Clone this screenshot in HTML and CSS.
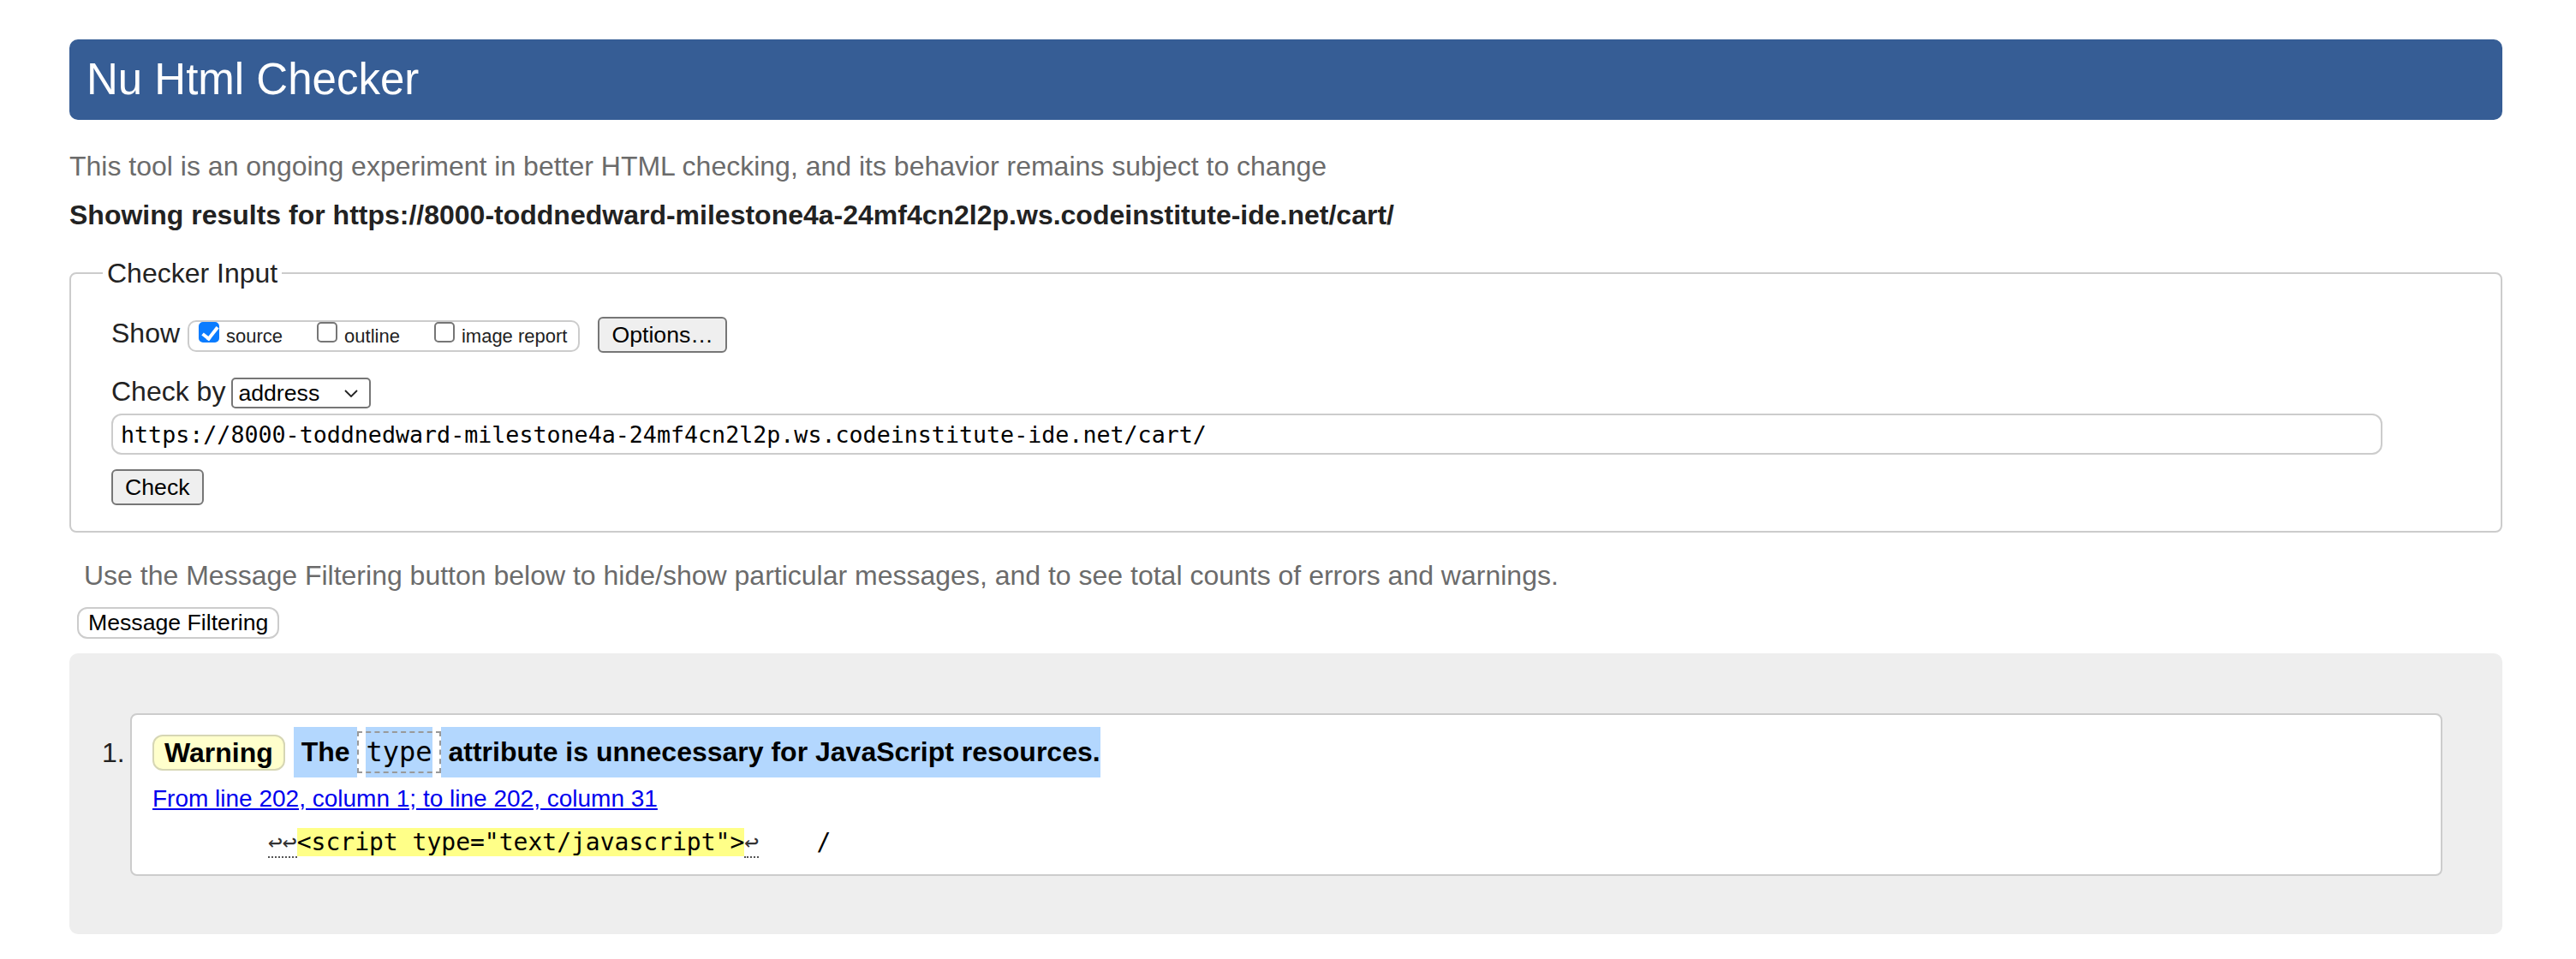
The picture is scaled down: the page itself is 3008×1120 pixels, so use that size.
FILE: index.html
```html
<!DOCTYPE html>
<html lang="en">
<head>
<meta charset="utf-8">
<title>Showing results for https://8000-toddnedward-milestone4a-24mf4cn2l2p.ws.codeinstitute-ide.net/cart/ - Nu Html Checker</title>
<link rel="stylesheet" href="styles.css">
</head>
<body>
<h1 class="title">Nu Html Checker</h1>
<p class="intro">This tool is an ongoing experiment in better HTML checking, and its behavior remains subject to change</p>
<p class="results-for">Showing results for https://8000-toddnedward-milestone4a-24mf4cn2l2p.ws.codeinstitute-ide.net/cart/</p>
<form class="checker">
  <fieldset class="input-set">
    <legend class="legend">Checker Input</legend>
    <div class="row row-show">
      <span class="label">Show</span>
      <span class="opts">
        <label class="opt"><span class="cb cb-on"></span><span class="opt-text">source</span></label>
        <label class="opt"><span class="cb"></span><span class="opt-text">outline</span></label>
        <label class="opt"><span class="cb"></span><span class="opt-text">image report</span></label>
      </span>
      <button type="button" class="btn btn-options">Options…</button>
    </div>
    <div class="row row-by">
      <span class="label">Check by</span>
      <span class="select"><span class="select-text">address</span><svg class="chevron" width="16" height="9" viewBox="0 0 16 9"><polyline points="1,1 8,8 15,1" fill="none" stroke="#222" stroke-width="1.8"/></svg></span>
    </div>
    <input class="url" type="text" value="https://8000-toddnedward-milestone4a-24mf4cn2l2p.ws.codeinstitute-ide.net/cart/">
    <div class="submit-row"><button type="button" class="btn btn-check">Check</button></div>
  </fieldset>
</form>
<p class="filter-note">Use the Message Filtering button below to hide/show particular messages, and to see total counts of errors and warnings.</p>
<button type="button" class="btn-filter">Message Filtering</button>
<div class="results">
  <ol class="messages">
    <li class="message">
      <span class="num">1.</span>
      <div class="msg-box">
        <p class="msg-line"><strong class="badge">Warning</strong><span class="hl"> The </span><span class="code-wrap"><code class="code">type</code></span><span class="hl"> attribute is unnecessary for JavaScript resources.</span></p>
        <p class="location"><a class="loc-link" href="#l202c31">From line 202, column 1; to line 202, column 31</a></p>
        <p class="extract"><code class="extract-code"><u class="lf">↩↩</u><b class="mark">&lt;script type="text/javascript"&gt;</b><u class="lf">↩</u>    /</code></p>
      </div>
    </li>
  </ol>
</div>
</body>
</html>
```
FILE: styles.css
```css
* { box-sizing: border-box; }

html, body { margin: 0; padding: 0; }

body {
  padding: 0 86px 0 81px;
  font-family: "Liberation Sans", Arial, Helvetica, sans-serif;
  color: #222;
  background: #fff;
}

.title {
  margin: 46px 0 0;
  height: 94px;
  padding: 0 20px;
  background: #365d95;
  color: #fff;
  border-radius: 10px;
  font-size: 51px;
  line-height: 94px;
  font-weight: normal;
}

.intro {
  margin: 34px 0 0;
  font-size: 32px;
  line-height: 40px;
  color: #6b6b6b;
}

.results-for {
  margin: 17px 0 0;
  font-size: 32px;
  line-height: 40px;
  font-weight: bold;
  color: #222;
}

.checker { margin: 30px 0 0; }

.input-set {
  margin: 0;
  padding: 33px 138px 30px 47px;
  border: 2px solid #ccc;
  border-radius: 8px;
  min-width: 0;
}

.legend {
  margin-left: -10px;
  padding: 0 5px;
  font-size: 32px;
  line-height: 36px;
  color: #222;
}

.row {
  display: flex;
  align-items: baseline;
}

.row-by { margin-top: 27px; }

.label {
  font-size: 32px;
  line-height: 37px;
  color: #222;
}

.opts {
  display: inline-flex;
  align-items: flex-start;
  height: 37px;
  margin-left: 9px;
  padding: 0 13px 0 11px;
  border: 2px solid #ccc;
  border-radius: 10px;
  gap: 40px;
}

.opt {
  display: inline-flex;
  align-items: baseline;
  gap: 8px;
  font-size: 22px;
  line-height: 25px;
  color: #222;
}

.cb {
  display: inline-block;
  width: 24px;
  height: 24px;
  border: 2px solid #767676;
  border-radius: 5px;
  background: #fff;
  position: relative;
}

.cb-on {
  background: #0a7cff;
  border-color: #0a7cff;
}

.cb-on::after {
  content: "";
  position: absolute;
  left: 6px;
  top: 0px;
  width: 7px;
  height: 15px;
  border: solid #fff;
  border-width: 0 4px 4px 0;
  transform: rotate(38deg);
}

.btn {
  height: 42px;
  padding: 0 14px;
  border: 2px solid #767676;
  border-radius: 6px;
  background: #efefef;
  color: #000;
  font-family: "Liberation Sans", Arial, Helvetica, sans-serif;
  font-size: 26.67px;
  line-height: 38px;
}

.btn-options { margin-left: 21px; }

.select {
  display: inline-flex;
  align-items: center;
  width: 163px;
  height: 36px;
  margin-left: 7px;
  padding: 0 13px 0 6px;
  border: 2px solid #767676;
  border-radius: 5px;
  background: #fff;
  color: #000;
  font-size: 26.67px;
}

.select-text { line-height: 28px; }

.chevron { margin-left: auto; }

.url {
  display: block;
  width: 100%;
  height: 48px;
  margin-top: 6px;
  padding: 0 9px;
  border: 2px solid #ccc;
  border-radius: 12px;
  background: #fff;
  color: #000;
  font-family: "DejaVu Sans Mono", "Liberation Mono", monospace;
  font-size: 26.67px;
}

.submit-row { margin-top: 17px; }

.filter-note {
  margin: 30px 0 0;
  padding-left: 17px;
  font-size: 32px;
  line-height: 40px;
  color: #6b6b6b;
}

.btn-filter {
  display: block;
  height: 37px;
  margin: 17px 0 0 9px;
  padding: 0 11px;
  border: 2px solid #ccc;
  border-radius: 12px;
  background: #fff;
  color: #000;
  font-family: "Liberation Sans", Arial, Helvetica, sans-serif;
  font-size: 26.67px;
  line-height: 33px;
}

.results {
  margin-top: 17px;
  padding: 70px 70px 68px 38px;
  background: #eee;
  border-radius: 10px;
}

.messages {
  list-style: none;
  margin: 0;
  padding: 0;
}

.message {
  display: flex;
  align-items: baseline;
}

.num {
  flex: 0 0 33px;
  font-size: 32px;
  color: #222;
}

.msg-box {
  flex: 1;
  padding: 14px 24px 20px;
  border: 2px solid #ccc;
  border-radius: 8px;
  background: #fff;
}

.msg-line {
  display: flex;
  align-items: center;
  height: 59px;
  margin: 0;
  font-size: 32px;
  color: #000;
}

.badge {
  display: inline-block;
  height: 42px;
  margin-right: 10px;
  padding: 0 12px;
  border: 2px solid #d6d6b4;
  border-radius: 12px;
  background: #ffffcc;
  font-weight: bold;
  line-height: 38px;
}

.hl {
  display: inline-block;
  height: 59px;
  line-height: 59px;
  background: #b3d7fe;
  font-weight: bold;
  white-space: pre;
}

.code-wrap {
  display: inline-flex;
  align-items: center;
  height: 59px;
  background: linear-gradient(to right, transparent 10px, #b3d7fe 10px, #b3d7fe calc(100% - 10px), transparent calc(100% - 10px));
}

.code {
  display: inline-block;
  height: 49px;
  padding: 0 8px;
  border: 2px dashed #999;
  font-family: "DejaVu Sans Mono", "Liberation Mono", monospace;
  font-size: 32px;
  line-height: 45px;
  color: #000;
}

.location {
  margin: 8px 0 0;
  font-size: 28px;
  line-height: 34px;
}

.loc-link { color: #0000ee; text-decoration: underline; }

.extract {
  margin: 17px 0 0;
  padding-left: 135px;
  font-size: 28px;
  line-height: 34px;
  white-space: pre;
}

.extract-code {
  font-family: "DejaVu Sans Mono", "Liberation Mono", monospace;
  font-size: 28px;
  color: #000;
}

.lf {
  text-decoration: none;
  border-bottom: 2px dotted #555;
  color: #333;
}

.mark {
  font-weight: normal;
  background: #ffff88;
  color: #000;
}
```
